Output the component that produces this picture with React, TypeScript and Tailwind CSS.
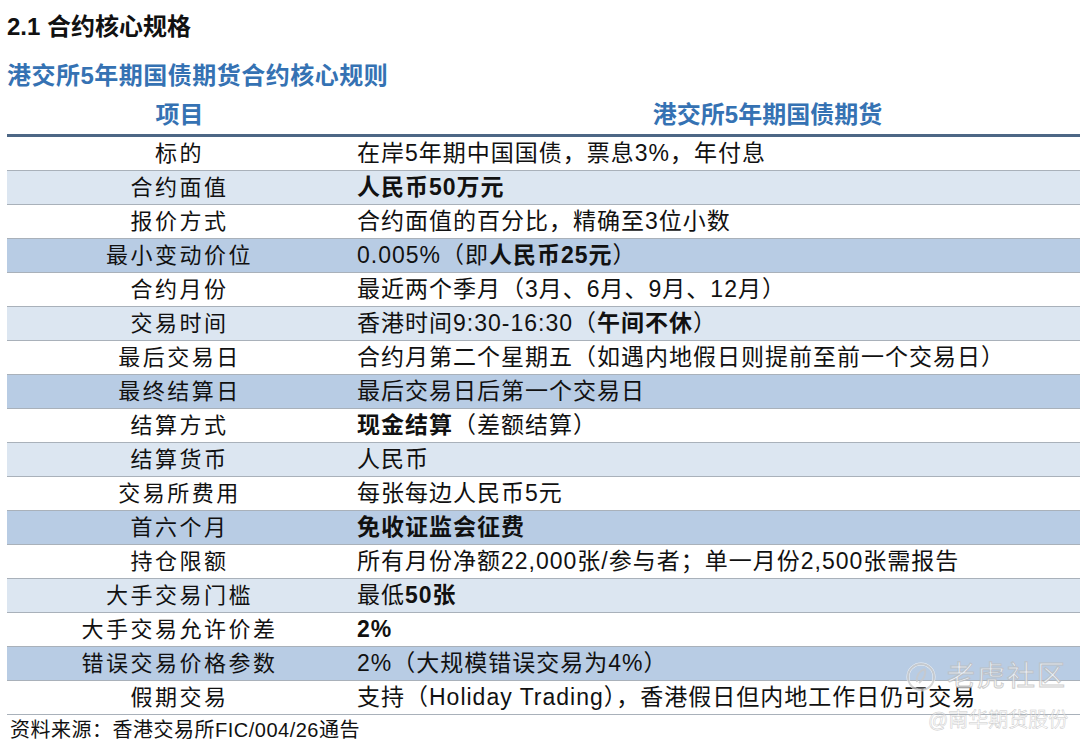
import React from "react";

type Part = { t: string; b?: boolean };

const rows: { k: string; v: Part[] }[] = [
  { k: "标的", v: [{ t: "在岸5年期中国国债，票息3%，年付息" }] },
  { k: "合约面值", v: [{ t: "人民币50万元", b: true }] },
  { k: "报价方式", v: [{ t: "合约面值的百分比，精确至3位小数" }] },
  { k: "最小变动价位", v: [{ t: "0.005%（即" }, { t: "人民币25元", b: true }, { t: "）" }] },
  { k: "合约月份", v: [{ t: "最近两个季月（3月、6月、9月、12月）" }] },
  { k: "交易时间", v: [{ t: "香港时间9:30-16:30（" }, { t: "午间不休", b: true }, { t: "）" }] },
  { k: "最后交易日", v: [{ t: "合约月第二个星期五（如遇内地假日则提前至前一个交易日）" }] },
  { k: "最终结算日", v: [{ t: "最后交易日后第一个交易日" }] },
  { k: "结算方式", v: [{ t: "现金结算", b: true }, { t: "（差额结算）" }] },
  { k: "结算货币", v: [{ t: "人民币" }] },
  { k: "交易所费用", v: [{ t: "每张每边人民币5元" }] },
  { k: "首六个月", v: [{ t: "免收证监会征费", b: true }] },
  { k: "持仓限额", v: [{ t: "所有月份净额22,000张/参与者；单一月份2,500张需报告" }] },
  { k: "大手交易门槛", v: [{ t: "最低" }, { t: "50张", b: true }] },
  { k: "大手交易允许价差", v: [{ t: "2%", b: true }] },
  { k: "错误交易价格参数", v: [{ t: "2%（大规模错误交易为4%）" }] },
  { k: "假期交易", v: [{ t: "支持（Holiday Trading），香港假日但内地工作日仍可交易" }] },
];

const rowBg = (i: number) =>
  i % 4 === 1 ? "bg-[#dce6f1]" : i % 4 === 3 ? "bg-[#b8cce4]" : "bg-white";

export default function App() {
  return (
    <div
      className="relative w-[1080px] h-[744px] overflow-hidden bg-white text-[#111]"
      style={{ fontFamily: '"Liberation Sans", "Noto Sans CJK SC", sans-serif' }}
    >
      <div className="pl-[7px] pt-[12px] text-[24px] font-bold leading-[30px]">2.1 合约核心规格</div>
      <div className="pl-[7px] mt-[19px] text-[24px] font-bold leading-[30px] tracking-[0.5px] text-[#3572b3]">
        港交所5年期国债期货合约核心规则
      </div>

      <div className="ml-[7px] mt-[5px] w-[1176px]">
        <div className="flex h-[41px] items-center border-b-[3px] border-[#4d6785] text-[24px] font-bold text-[#3572b3]">
          <div className="w-[345px] text-center">项目</div>
          <div className="flex-1 text-center">港交所5年期国债期货</div>
        </div>
        {rows.map((r, i) => (
          <div
            key={r.k}
            className={`flex h-[34px] items-center border-b border-[#a9b1ba] leading-none ${rowBg(i)}`}
          >
            <div className="w-[345px] text-center text-[22px] tracking-[2.5px]">{r.k}</div>
            <div className="flex-1 pl-[5px] text-[23px] tracking-[1px]">
              {r.v.map((p, j) => (
                <span key={j} className={p.b ? "font-bold" : ""}>
                  {p.t}
                </span>
              ))}
            </div>
          </div>
        ))}
      </div>

      <div className="pl-[10px] pt-[2px] text-[20px] leading-[26px] tracking-[0.5px]">
        资料来源：香港交易所FIC/004/26通告
      </div>

      {/* watermark */}
      <div className="absolute left-[905px] top-[662px] flex items-center gap-[10px] text-white opacity-75 pointer-events-none">
        <svg width="32" height="30" viewBox="0 0 32 30" fill="none" stroke="#c9c9c9" strokeWidth="2">
          <circle cx="16" cy="15" r="13" stroke="#ffffff" strokeWidth="3" />
          <circle cx="16" cy="15" r="13" />
          <path d="M20 7 C14 9 11 14 12 20 M20 7 C21 12 19 17 14 21" />
        </svg>
        <span
          className="text-[28px] leading-none tracking-[2px]"
          style={{ WebkitTextStroke: "1px #bdbdbd" }}
        >
          老虎社区
        </span>
      </div>
      <div
        className="absolute left-[928px] top-[710px] text-[20px] leading-none text-white opacity-60 pointer-events-none"
        style={{ WebkitTextStroke: "0.5px #a8a8a8" }}
      >
        @南华期货股份
      </div>
    </div>
  );
}
